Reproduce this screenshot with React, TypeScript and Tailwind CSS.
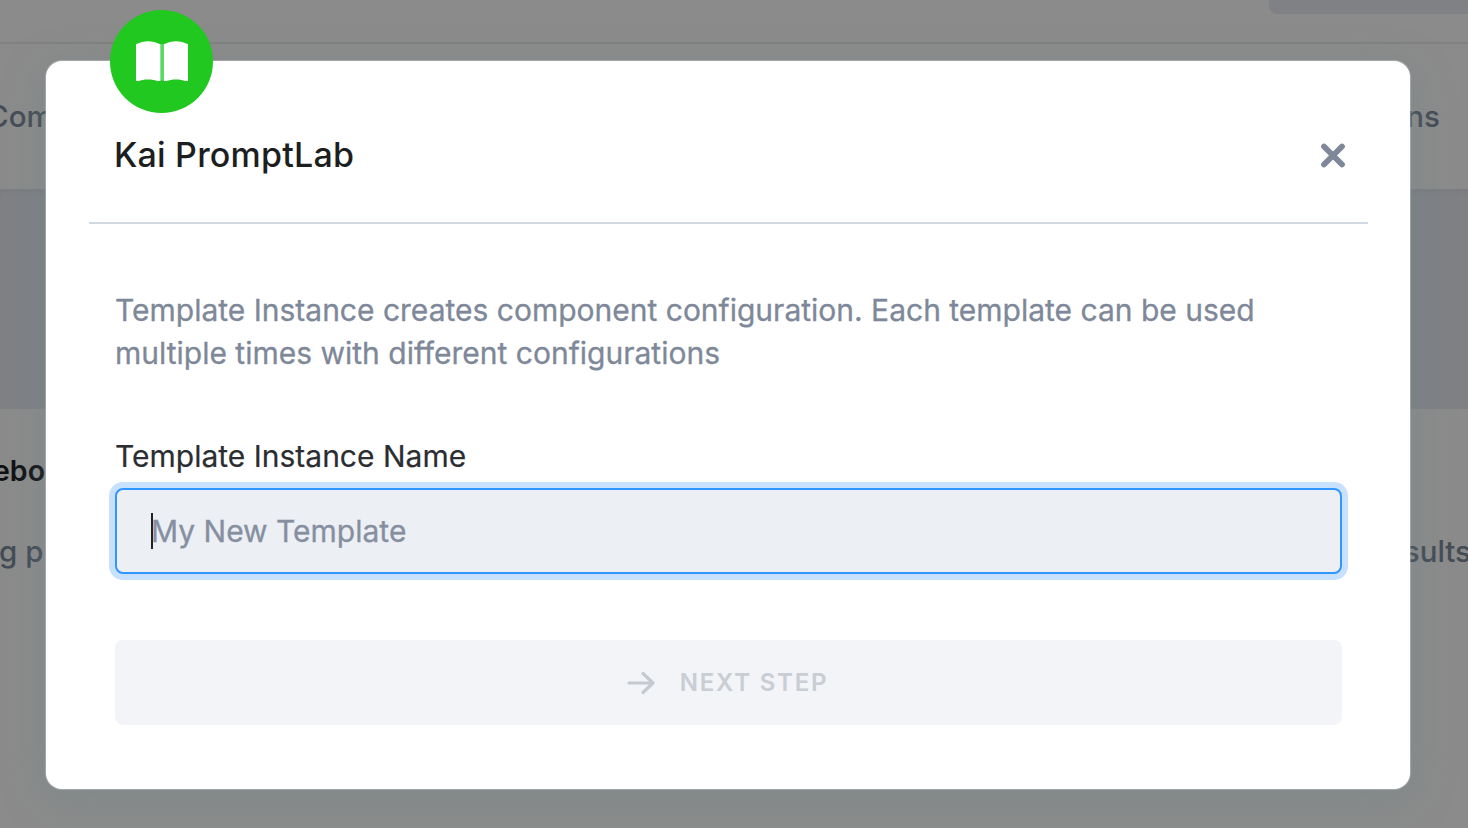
import React from "react";

function BookIcon() {
  return (
    <svg width="54" height="44" viewBox="0 0 54 44" aria-hidden="true">
      <rect x="24.500" y="4" width="5" height="36.500" fill="#5bdb66" />
      <path
        d="M1 4.200C5 2.200 9 1.200 13 1.200S21 2.200 25.300 4.200V41H23C18 38.900 8 38.900 3.500 41H1ZM29 4.200C33 2.200 37 1.200 41 1.200S49 2.200 53 4.200V41H50.500C46 38.900 36 38.900 31.500 41H29Z"
        fill="#fff"
      />
    </svg>
  );
}

function CloseIcon() {
  return (
    <svg width="26" height="26" viewBox="0 0 26 26" fill="none" stroke="#7e8899" strokeWidth="5.800" strokeLinecap="round" aria-hidden="true">
      <path d="M4 4.500 22 22.500M22 4.500 4 22.500" />
    </svg>
  );
}

function ArrowIcon() {
  return (
    <svg width="28" height="24" viewBox="0 0 28 24" fill="none" stroke="#c5cad1" strokeWidth="3.200" strokeLinecap="round" strokeLinejoin="round" aria-hidden="true">
      <path d="M2 12H26M16 2.500 26 12 16 21.500" />
    </svg>
  );
}

function Backdrop() {
  return (
    <div className="flex h-full flex-col bg-white text-[29.500px] leading-[34px] text-[#7d8b9c]">
      <div className="flex h-[44px] justify-end border-b-2 border-[#ebeced]">
        <div className="h-[14px] w-[199px] rounded-bl-[8px] bg-[#eaedf4]" />
      </div>
      <div className="flex h-[145px] items-center justify-between pr-[28px] pb-[2px] font-medium">
        <span className="-ml-[13px]">Com</span>
        <span>ns</span>
      </div>
      <div className="h-[220px] bg-[#eaedf4] shadow-[inset_0_6px_8px_-4px_rgba(0,0,0,0.06)]" />
      <div className="flex flex-col pt-[45px]">
        <span className="-ml-[7px] text-[28.500px] font-semibold text-[#1d1f23]">ebo</span>
        <div className="flex justify-between pt-[46px] font-medium">
          <span className="-ml-px">g p</span>
          <span className="-mr-[3px]">sults</span>
        </div>
      </div>
    </div>
  );
}

export default function App() {
  return (
    <div className="relative h-[828px] w-[1468px] overflow-hidden font-['Inter',sans-serif]">
      <Backdrop />
      <div className="absolute inset-0 bg-black/[0.455] pt-[61px] pl-[46px]">
        <div className="relative flex h-[728px] w-[1364px] flex-col rounded-[16px] bg-white pr-[42px] pl-[43px] shadow-[0_0_1px_1px_rgba(220,225,225,0.35),0_10px_44px_rgba(112,133,138,0.42)]">
          <div className="absolute -top-[51px] left-[64px] flex size-[103px] items-center justify-center rounded-full bg-[#20c820]">
            <BookIcon />
          </div>
          <header className="flex h-[163px] items-center justify-between border-b-2 border-[#d3d9e3] pt-[26px] pr-[22px] pl-[25px]">
            <h1 className="text-[34px] leading-[42px] font-medium tracking-[0.2px] text-[#1c1e22]">Kai PromptLab</h1>
            <button aria-label="Close">
              <CloseIcon />
            </button>
          </header>
          <div className="flex flex-col px-[26px] pt-[65px]">
            <p className="text-[30px] leading-[43px] whitespace-nowrap text-[#7e8899] [-webkit-text-stroke:0.3px]">
              Template Instance creates component configuration. Each template can be used
              <br />
              multiple times with different configurations
            </p>
            <label className="mt-[60px] text-[30px] leading-[43px] text-[#2b2d31] [-webkit-text-stroke:0.2px]">Template Instance Name</label>
            <div className="mt-[10px] flex h-[86px] items-center rounded-[8px] border-2 border-[#3196ff] bg-[#eceff4] pl-[34px] shadow-[0_0_0_6px_#c8e1ff]">
              <span className="h-[36px] w-[2px] bg-[#222]" />
              <span className="-ml-[2px] text-[30px] leading-[36px] text-[#868f9f] [-webkit-text-stroke:0.3px]">My New Template</span>
            </div>
            <button className="mt-[66px] flex h-[85px] items-center justify-center gap-[25px] rounded-[8px] bg-[#f3f4f8] pr-[2px] text-[24px] font-semibold tracking-[1.800px] text-[#c9cdd4]">
              <ArrowIcon />
              <span>NEXT STEP</span>
            </button>
          </div>
        </div>
      </div>
    </div>
  );
}
